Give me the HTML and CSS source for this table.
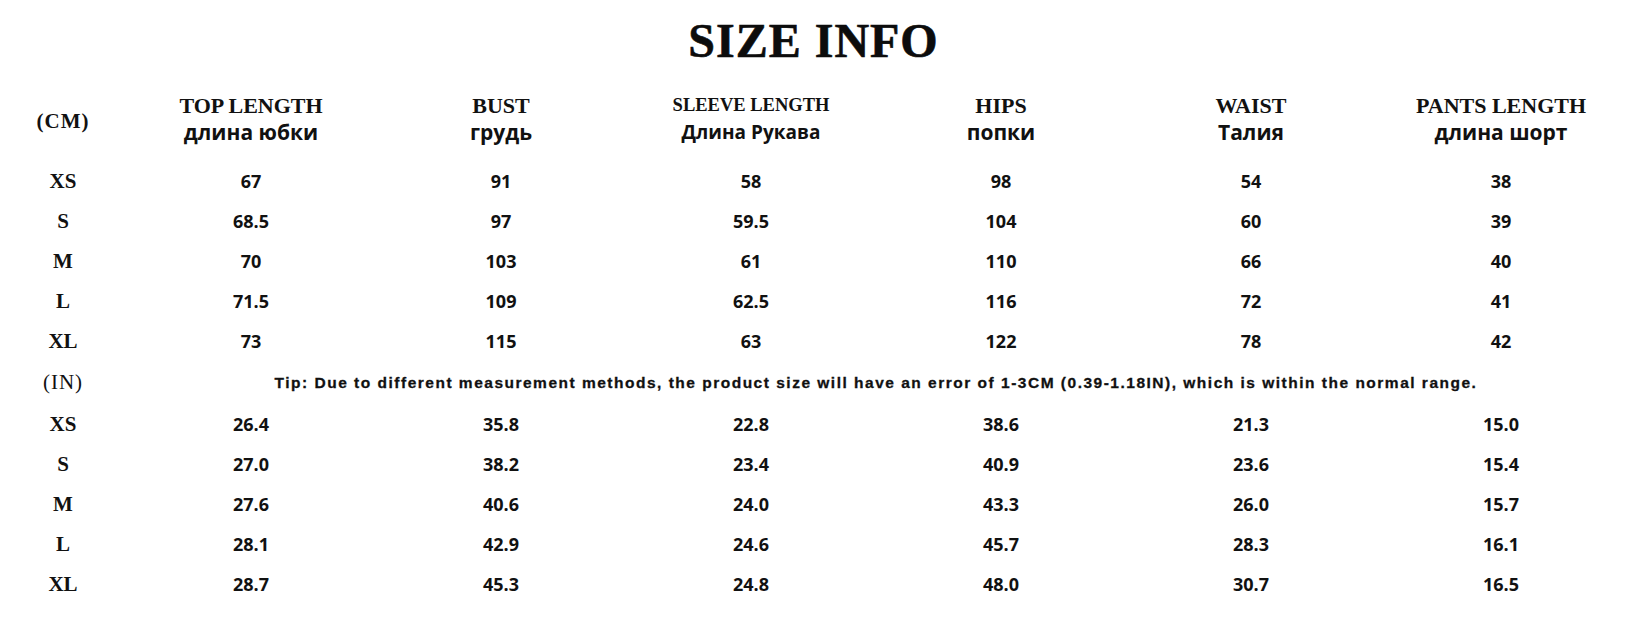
FILE: index.html
```html
<!DOCTYPE html>
<html>
<head>
<meta charset="utf-8">
<link rel="stylesheet" href="styles.css">
</head>
<body>
<div class="page">
  <h1 class="title">SIZE INFO</h1>
  <div class="table">
    <div class="unit unit-cm">(CM)</div>
    <div class="head"><span class="en">TOP LENGTH</span><span class="ru">длина юбки</span></div>
    <div class="head"><span class="en">BUST</span><span class="ru">грудь</span></div>
    <div class="head"><span class="en en-small">SLEEVE LENGTH</span><span class="ru ru-narrow">Длина Рукава</span></div>
    <div class="head"><span class="en">HIPS</span><span class="ru">попки</span></div>
    <div class="head"><span class="en">WAIST</span><span class="ru">Талия</span></div>
    <div class="head"><span class="en">PANTS LENGTH</span><span class="ru">длина шорт</span></div>

    <div class="size">XS</div><div class="val">67</div><div class="val">91</div><div class="val">58</div><div class="val">98</div><div class="val">54</div><div class="val">38</div>
    <div class="size">S</div><div class="val">68.5</div><div class="val">97</div><div class="val">59.5</div><div class="val">104</div><div class="val">60</div><div class="val">39</div>
    <div class="size">M</div><div class="val">70</div><div class="val">103</div><div class="val">61</div><div class="val">110</div><div class="val">66</div><div class="val">40</div>
    <div class="size">L</div><div class="val">71.5</div><div class="val">109</div><div class="val">62.5</div><div class="val">116</div><div class="val">72</div><div class="val">41</div>
    <div class="size">XL</div><div class="val">73</div><div class="val">115</div><div class="val">63</div><div class="val">122</div><div class="val">78</div><div class="val">42</div>

    <div class="unit unit-in">(IN)</div>
    <div class="tip">Tip: Due to different measurement methods, the product size will have an error of 1-3CM (0.39-1.18IN), which is within the normal range.</div>

    <div class="size">XS</div><div class="val">26.4</div><div class="val">35.8</div><div class="val">22.8</div><div class="val">38.6</div><div class="val">21.3</div><div class="val">15.0</div>
    <div class="size">S</div><div class="val">27.0</div><div class="val">38.2</div><div class="val">23.4</div><div class="val">40.9</div><div class="val">23.6</div><div class="val">15.4</div>
    <div class="size">M</div><div class="val">27.6</div><div class="val">40.6</div><div class="val">24.0</div><div class="val">43.3</div><div class="val">26.0</div><div class="val">15.7</div>
    <div class="size">L</div><div class="val">28.1</div><div class="val">42.9</div><div class="val">24.6</div><div class="val">45.7</div><div class="val">28.3</div><div class="val">16.1</div>
    <div class="size">XL</div><div class="val">28.7</div><div class="val">45.3</div><div class="val">24.8</div><div class="val">48.0</div><div class="val">30.7</div><div class="val">16.5</div>
  </div>
</div>
</body>
</html>
```

FILE: styles.css
```css
html, body {
  margin: 0;
  padding: 0;
  background: #ffffff;
  overflow: hidden;
}

.page {
  width: 1627px;
  height: 628px;
  overflow: hidden;
  color: #111111;
}

.title {
  margin: 0;
  height: 82px;
  line-height: 82px;
  text-align: center;
  font-family: "Liberation Serif", "Times New Roman", serif;
  font-weight: bold;
  font-size: 48px;
  letter-spacing: 1px;
  color: #0c0c0c;
  -webkit-text-stroke: 0.6px #0c0c0c;
}

.table {
  display: grid;
  grid-template-columns: 126px repeat(6, 250px);
  grid-template-rows: 79px repeat(5, 40px) 43px repeat(5, 40px);
  align-items: center;
  justify-items: center;
}

.head {
  display: flex;
  flex-direction: column;
  align-items: center;
  gap: 1px;
  margin-top: -4px;
}

.en {
  font-family: "Liberation Serif", "Times New Roman", serif;
  font-weight: bold;
  font-size: 22px;
  line-height: 25px;
}

.en-small {
  font-size: 18.5px;
}

.ru {
  font-family: "Open Sans", "DejaVu Sans", sans-serif;
  font-weight: bold;
  font-size: 21px;
  line-height: 27px;
}

.ru-narrow {
  font-size: 19px;
}

.unit {
  font-family: "Liberation Serif", "Times New Roman", serif;
  font-size: 21px;
  letter-spacing: 1px;
}

.unit-cm {
  font-weight: bold;
}

.size {
  font-family: "Liberation Serif", "Times New Roman", serif;
  font-weight: bold;
  font-size: 21px;
}

.val {
  font-family: "Open Sans", "DejaVu Sans", sans-serif;
  font-weight: bold;
  font-size: 18px;
}

.tip {
  grid-column: 2 / -1;
  font-family: "Liberation Sans", Arial, sans-serif;
  font-weight: bold;
  font-size: 15.5px;
  letter-spacing: 1.5px;
  -webkit-text-stroke: 0.3px #111111;
}
```
